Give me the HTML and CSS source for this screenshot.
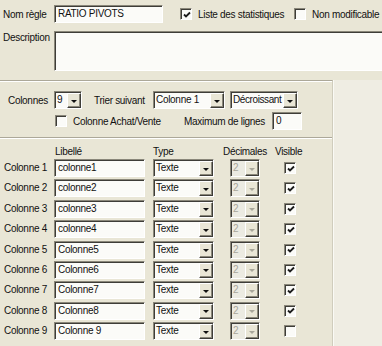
FILE: index.html
```html
<!DOCTYPE html>
<html lang="fr">
<head>
    <meta charset="UTF-8">
    <title>Règle - Ratio pivots</title>
    <link rel="stylesheet" href="styles.css">
</head>
<body>
    <div class="dlg">
        <div class="top">
            <div class="line l-nom">
                <span class="lbl w-lead">Nom règle</span>
                <div class="field f-nom">RATIO PIVOTS</div>
                <span class="chk c-liste"><svg viewBox="0 0 8 8"><path d="M1 3.5 L3 5.5 L7 1.5"/></svg></span>
                <span class="lbl w-liste">Liste des statistiques</span>
                <span class="chk"></span>
                <span class="lbl w-nonmod">Non modificable</span>
            </div>
            <div class="line l-desc">
                <span class="lbl w-lead">Description</span>
                <div class="field f-desc"></div>
            </div>
        </div>

        <div class="body">
            <div class="panel">
                <div class="line l-cols">
                    <span class="lbl w-cols">Colonnes</span>
                    <div class="field combo cb-nb"><span class="txt">9</span><span class="btn"><i></i></span></div>
                    <span class="lbl w-trier">Trier suivant</span>
                    <div class="field combo cb-tri"><span class="txt">Colonne 1</span><span class="btn"><i></i></span></div>
                    <div class="field combo cb-ordre"><span class="txt">Décroissant</span><span class="btn"><i></i></span></div>
                </div>
                <div class="line l-ach">
                    <span class="chk"></span>
                    <span class="lbl w-ach">Colonne Achat/Vente</span>
                    <span class="lbl w-max">Maximum de lignes</span>
                    <div class="field f-max">0</div>
                </div>

                <div class="cols head">
                    <span class="g-lib">Libellé</span>
                    <span class="g-type">Type</span>
                    <span class="g-dec">Décimales</span>
                    <span class="g-vis">Visible</span>
                </div>

                <div class="rows">
                    <div class="cols row">
                        <span class="lbl">Colonne 1</span>
                        <div class="field g-lib">colonne1</div>
                        <div class="field combo g-type"><span class="txt">Texte</span><span class="btn"><i></i></span></div>
                        <div class="field combo off g-dec"><span class="txt">2</span><span class="btn"><i></i></span></div>
                        <span class="chk g-vis"><svg viewBox="0 0 8 8"><path d="M1 3.5 L3 5.5 L7 1.5"/></svg></span>
                    </div>
                    <div class="cols row">
                        <span class="lbl">Colonne 2</span>
                        <div class="field g-lib">colonne2</div>
                        <div class="field combo g-type"><span class="txt">Texte</span><span class="btn"><i></i></span></div>
                        <div class="field combo off g-dec"><span class="txt">2</span><span class="btn"><i></i></span></div>
                        <span class="chk g-vis"><svg viewBox="0 0 8 8"><path d="M1 3.5 L3 5.5 L7 1.5"/></svg></span>
                    </div>
                    <div class="cols row">
                        <span class="lbl">Colonne 3</span>
                        <div class="field g-lib">colonne3</div>
                        <div class="field combo g-type"><span class="txt">Texte</span><span class="btn"><i></i></span></div>
                        <div class="field combo off g-dec"><span class="txt">2</span><span class="btn"><i></i></span></div>
                        <span class="chk g-vis"><svg viewBox="0 0 8 8"><path d="M1 3.5 L3 5.5 L7 1.5"/></svg></span>
                    </div>
                    <div class="cols row">
                        <span class="lbl">Colonne 4</span>
                        <div class="field g-lib">colonne4</div>
                        <div class="field combo g-type"><span class="txt">Texte</span><span class="btn"><i></i></span></div>
                        <div class="field combo off g-dec"><span class="txt">2</span><span class="btn"><i></i></span></div>
                        <span class="chk g-vis"><svg viewBox="0 0 8 8"><path d="M1 3.5 L3 5.5 L7 1.5"/></svg></span>
                    </div>
                    <div class="cols row">
                        <span class="lbl">Colonne 5</span>
                        <div class="field g-lib">Colonne5</div>
                        <div class="field combo g-type"><span class="txt">Texte</span><span class="btn"><i></i></span></div>
                        <div class="field combo off g-dec"><span class="txt">2</span><span class="btn"><i></i></span></div>
                        <span class="chk g-vis"><svg viewBox="0 0 8 8"><path d="M1 3.5 L3 5.5 L7 1.5"/></svg></span>
                    </div>
                    <div class="cols row">
                        <span class="lbl">Colonne 6</span>
                        <div class="field g-lib">Colonne6</div>
                        <div class="field combo g-type"><span class="txt">Texte</span><span class="btn"><i></i></span></div>
                        <div class="field combo off g-dec"><span class="txt">2</span><span class="btn"><i></i></span></div>
                        <span class="chk g-vis"><svg viewBox="0 0 8 8"><path d="M1 3.5 L3 5.5 L7 1.5"/></svg></span>
                    </div>
                    <div class="cols row">
                        <span class="lbl">Colonne 7</span>
                        <div class="field g-lib">Colonne7</div>
                        <div class="field combo g-type"><span class="txt">Texte</span><span class="btn"><i></i></span></div>
                        <div class="field combo off g-dec"><span class="txt">2</span><span class="btn"><i></i></span></div>
                        <span class="chk g-vis"><svg viewBox="0 0 8 8"><path d="M1 3.5 L3 5.5 L7 1.5"/></svg></span>
                    </div>
                    <div class="cols row">
                        <span class="lbl">Colonne 8</span>
                        <div class="field g-lib">Colonne8</div>
                        <div class="field combo g-type"><span class="txt">Texte</span><span class="btn"><i></i></span></div>
                        <div class="field combo off g-dec"><span class="txt">2</span><span class="btn"><i></i></span></div>
                        <span class="chk g-vis"><svg viewBox="0 0 8 8"><path d="M1 3.5 L3 5.5 L7 1.5"/></svg></span>
                    </div>
                    <div class="cols row">
                        <span class="lbl">Colonne 9</span>
                        <div class="field g-lib">Colonne 9</div>
                        <div class="field combo g-type"><span class="txt">Texte</span><span class="btn"><i></i></span></div>
                        <div class="field combo off g-dec"><span class="txt">2</span><span class="btn"><i></i></span></div>
                        <span class="chk g-vis"></span>
                    </div>
                </div>
            </div>
            <div class="side"></div>
        </div>
    </div>
</body>
</html>
```

FILE: styles.css
```css
body {
    margin: 0;
    background: #e9e6d6;
    font-family: "Liberation Sans", Arial, sans-serif;
    font-size: 10px;
    letter-spacing: -0.3px;
    color: #111;
}

.dlg {
    width: 382px;
    height: 346px;
    overflow: hidden;
}

.line {
    display: flex;
    align-items: center;
}

.lbl {
    white-space: nowrap;
    flex: none;
}

/* sunken 3D field */
.field {
    box-sizing: border-box;
    height: 18px;
    background: #fbfbf8;
    border: 1px solid;
    border-color: #8a877a #fff #fff #8a877a;
    box-shadow: inset 1px 1px #3e3d38;
    padding: 0 0 0 3px;
    line-height: 16px;
    white-space: nowrap;
    overflow: hidden;
    flex: none;
}

.chk {
    box-sizing: border-box;
    width: 12px;
    height: 12px;
    background: #fbfbf8;
    border: 1px solid;
    border-color: #8a877a #fff #fff #8a877a;
    box-shadow: inset 1px 1px #3e3d38;
    flex: none;
    display: flex;
    align-items: center;
    justify-content: center;
}

.chk svg {
    width: 8px;
    height: 8px;
    margin: 1px 0 0 1px;
}

.chk path {
    fill: none;
    stroke: #1c1c1c;
    stroke-width: 1.8;
}

/* combo box */
.combo {
    display: flex;
    padding: 0;
}

.combo .txt {
    flex: 1;
    padding-left: 2px;
    overflow: hidden;
}

.combo .btn {
    box-sizing: border-box;
    width: 14px;
    flex: none;
    margin-top: 1px;
    background: #e9e6d6;
    border: 1px solid;
    border-color: #fff #3e3d38 #3e3d38 #fff;
    box-shadow: inset -1px -1px #8a877a;
    display: flex;
    align-items: center;
    justify-content: center;
}

.combo .btn i {
    width: 0;
    height: 0;
    border-left: 3px solid transparent;
    border-right: 3px solid transparent;
    border-top: 3px solid #111;
    margin-top: 1px;
}

.combo.off {
    background: #ecebe2;
    color: #a8a69a;
}

.combo.off .btn i {
    border-top-color: #a8a69a;
}

/* top part */
.top {
    padding-top: 5px;
}

.w-lead {
    width: 51px;
    padding-left: 3px;
}

.f-nom {
    width: 109px;
}

.c-liste {
    margin-left: 17px;
}

.w-liste {
    width: 96px;
    margin-left: 6px;
}

.w-nonmod {
    margin-left: 6px;
}

.l-desc {
    align-items: flex-start;
    margin-top: 8px;
}

.l-desc .lbl {
    line-height: 14px;
}

.f-desc {
    width: 340px;
    height: 40px;
}

/* lower part */
.body {
    display: flex;
    margin-top: 9px;
    height: 266px;
}

.panel {
    width: 332px;
    border-top: 1px solid #aca899;
    box-shadow: inset 0 1px #fff;
    border-right: 1px solid #d0cdbd;
}

.side {
    flex: 1;
    background: #efede3;
    border-left: 1px solid #fafaf5;
}

.l-cols {
    margin-top: 10px;
}

.w-cols {
    width: 46px;
    padding-left: 8px;
}

.cb-nb {
    width: 28px;
}

.w-trier {
    width: 59px;
    margin-left: 12px;
}

.cb-tri {
    width: 72px;
}

.cb-ordre {
    width: 68px;
    margin-left: 5px;
    letter-spacing: -0.4px;
}

.l-ach {
    margin-top: 3px;
    padding-left: 55px;
    padding-bottom: 7px;
    border-bottom: 1px solid #aca899;
    box-shadow: 0 1px #fff;
}

.w-ach {
    width: 111px;
    margin-left: 6px;
}

.w-max {
    width: 88px;
}

.f-max {
    width: 30px;
}

/* columns table */
.cols {
    display: grid;
    grid-template-columns: 54px 91px 8px 61px 16px 30px 24px 12px;
}

.g-lib {
    grid-column: 2;
}

.g-type {
    grid-column: 4;
}

.g-dec {
    grid-column: 6;
}

.g-vis {
    grid-column: 8;
}

.head {
    height: 19px;
    padding-bottom: 2px;
    align-items: end;
    white-space: nowrap;
}

.head .g-lib {
    padding-left: 1px;
}

.head .g-dec {
    margin-left: -7px;
}

.head .g-vis {
    margin-left: -9px;
}

.rows {
    display: grid;
    grid-auto-rows: 20.4px;
}

.row {
    align-items: start;
}

.row .lbl {
    padding-left: 4px;
    line-height: 18px;
}

.row .chk {
    margin-top: 3px;
}
```
